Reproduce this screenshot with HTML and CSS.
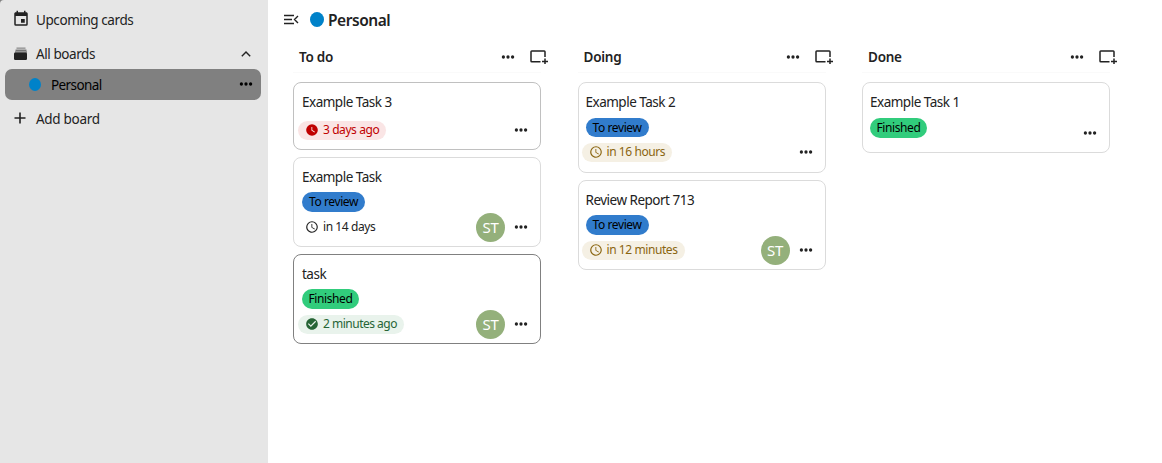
FILE: index.html
```html
<!DOCTYPE html>
<html lang="en">
<head>
<meta charset="utf-8">
<title>Personal - Deck</title>
<link rel="stylesheet" href="styles.css">
</head>
<body>
<svg width="0" height="0" class="defs">
  <symbol id="dots" viewBox="0 0 14 6"><circle cx="2.4" cy="3" r="1.65"/><circle cx="7" cy="3" r="1.65"/><circle cx="11.6" cy="3" r="1.65"/></symbol>
  <symbol id="add-card" viewBox="0 0 18 14"><path d="M10.500 11.700H1.800Q1 11.700 1 10.900V1.800Q1 1 1.800 1H14.200Q15 1 15 1.800V7M15 8.500V14M12 11.500H18" fill="none" stroke="currentColor" stroke-width="1.500"/></symbol>
  <symbol id="clock" viewBox="0 0 24 24"><path d="M12,20A8,8 0 0,0 20,12A8,8 0 0,0 12,4A8,8 0 0,0 4,12A8,8 0 0,0 12,20M12,2A10,10 0 0,1 22,12A10,10 0 0,1 12,22C6.470,22 2,17.500 2,12A10,10 0 0,1 12,2M12.500,7V12.250L17,14.920L16.250,16.150L11,13V7H12.500Z"/></symbol>
  <symbol id="clock-full" viewBox="0 0 24 24"><path d="M12,2A10,10 0 0,0 2,12A10,10 0 0,0 12,22A10,10 0 0,0 22,12A10,10 0 0,0 12,2M16.200,16.200L11,13V7H12.500V12.200L17,14.900L16.200,16.200Z"/></symbol>
  <symbol id="check" viewBox="0 0 24 24"><path d="M12 2C6.500 2 2 6.500 2 12S6.500 22 12 22 22 17.500 22 12 17.500 2 12 2M10 17L5 12L6.410 10.590L10 14.170L17.590 6.580L19 8L10 17Z"/></symbol>
</svg>
<div class="app">
  <nav class="sidebar">
    <a class="nav upcoming"><svg class="nav-icon" viewBox="0 0 24 24"><path d="M19,19H5V8H19M16,1V3H8V1H6V3H5C3.890,3 3,3.890 3,5V19A2,2 0 0,0 5,21H19A2,2 0 0,0 21,19V5C21,3.890 20.100,3 19,3H18V1M17,12H12V17H17V12Z"/></svg><span class="nav-text">Upcoming cards</span></a>
    <a class="nav boards"><svg class="nav-icon" viewBox="0 0 18 18"><path d="M4.500 2.500h9v1.300h-9z" opacity=".45"/><path d="M3.500 4.600h11v1.300h-11z" opacity=".65"/><path d="M3 6.500h12v1h-12z" opacity=".8"/><rect x="2" y="7.500" width="13" height="7.500" rx="1.200"/></svg><span class="nav-text">All boards</span><svg class="chevron" viewBox="0 0 10 6"><path d="M.8 5.200L5 1L9.200 5.200"/></svg></a>
    <a class="nav active"><span class="dot"></span><span class="nav-text">Personal</span><svg class="dots"><use href="#dots"/></svg></a>
    <a class="nav add"><svg class="nav-icon" viewBox="0 0 18 18"><path d="M7.200 2.500h1.600v4.700h4.700v1.600h-4.700v4.700h-1.600v-4.700h-4.700v-1.600h4.700z"/></svg><span class="nav-text">Add board</span></a>
  </nav>
  <main class="main">
    <header class="topbar"><svg class="menu" viewBox="0 0 15 11"><path d="M0 1.500H10M0 5.500H8M0 9.500H10M14 2L10.500 5.500L14 9"/></svg><span class="board-dot"></span><h1>Personal</h1></header>
    <div class="board">
      <section class="column first">
        <div class="head"><h2>To do</h2><svg class="dots"><use href="#dots"/></svg><svg class="add-card"><use href="#add-card"/></svg></div>
        <div class="cards">
          <article class="card simple mid"><h3>Example Task 3</h3><div class="foot"><span class="due overdue"><svg><use href="#clock-full"/></svg>3 days ago</span><svg class="dots"><use href="#dots"/></svg></div></article>
          <article class="card"><h3>Example Task</h3><span class="label review">To review</span><div class="foot"><span class="due"><svg><use href="#clock"/></svg>in 14 days</span><span class="avatar">ST</span><svg class="dots"><use href="#dots"/></svg></div></article>
          <article class="card current"><h3>task</h3><span class="label finished">Finished</span><div class="foot"><span class="due done"><svg><use href="#check"/></svg>2 minutes ago</span><span class="avatar">ST</span><svg class="dots"><use href="#dots"/></svg></div></article>
        </div>
      </section>
      <section class="column">
        <div class="head"><h2>Doing</h2><svg class="dots"><use href="#dots"/></svg><svg class="add-card"><use href="#add-card"/></svg></div>
        <div class="cards">
          <article class="card tall"><h3>Example Task 2</h3><span class="label review">To review</span><div class="foot"><span class="due soon"><svg><use href="#clock"/></svg>in 16 hours</span><svg class="dots"><use href="#dots"/></svg></div></article>
          <article class="card"><h3>Review Report 713</h3><span class="label review">To review</span><div class="foot"><span class="due soon"><svg><use href="#clock"/></svg>in 12 minutes</span><span class="avatar">ST</span><svg class="dots"><use href="#dots"/></svg></div></article>
        </div>
      </section>
      <section class="column">
        <div class="head"><h2>Done</h2><svg class="dots"><use href="#dots"/></svg><svg class="add-card"><use href="#add-card"/></svg></div>
        <div class="cards">
          <article class="card compact"><h3>Example Task 1</h3><div class="foot"><span class="label finished">Finished</span><svg class="dots"><use href="#dots"/></svg></div></article>
        </div>
      </section>
    </div>
  </main>
</div>
</body>
</html>
```
FILE: styles.css
```css
* { box-sizing: border-box; }
body { margin: 0; background: #fff; color: #222; font: 14px/20px "Segoe UI", "Noto Sans", sans-serif; }
svg { display: block; flex: none; fill: currentColor; }
.defs { position: absolute; }
h1, h2, h3 { margin: 0; white-space: nowrap; }
.app { display: flex; height: 463px; overflow: hidden; background: #808080; }
.sidebar { width: 268px; flex: none; padding: 4px 7px 0 5px; background: #e6e6e6; border-top-left-radius: 4px; }
.nav { display: flex; align-items: center; height: 31px; padding-left: 7px; border-radius: 7px; }
.nav-icon { width: 18px; height: 18px; margin-right: 6px; }
.upcoming .nav-icon { margin-top: -2px; }
.nav-text { font-size: 13.5px; white-space: nowrap; letter-spacing: -.42px; }
.boards { margin-top: 3px; padding-right: 10px; }
.chevron { width: 10px; height: 6px; margin-left: auto; fill: none; stroke: #222; stroke-width: 1.4; }
.active { background: #808080; color: #000; padding: 0 8px 0 24px; }
.active .nav-text { letter-spacing: -.6px; }
.dot { width: 12px; height: 13px; margin-right: 10px; border-radius: 50%; background: #0082c9; }
.dots { width: 14px; height: 6px; margin-left: auto; }
.active .dots { margin-top: -1px; }
.add { margin-top: 3px; }
.add .nav-text { letter-spacing: -.3px; }
.main { flex: 1; background: #fff; }
.topbar { display: flex; align-items: center; height: 39px; padding-left: 16px; }
.menu { width: 15px; height: 11px; margin-top: -1px; fill: none; stroke: #222; stroke-width: 1.4; }
.board-dot { width: 14px; height: 15px; margin: 0 4px 0 11px; border-radius: 50%; background: #0082c9; }
h1 { font-size: 15.5px; font-weight: 600; letter-spacing: -.45px; }
.board { display: flex; gap: 36.5px; padding-left: 25px; }
.column { width: 248px; --inset: 7px; }
.first { --inset: 8px; }
.head { display: flex; align-items: center; height: 36px; padding-left: 6px; }
.head .dots { margin-right: 15px; }
h2 { font-size: 13.5px; font-weight: 600; letter-spacing: -.25px; }
.add-card { width: 18px; height: 14px; margin-right: -7px; }
.cards { display: flex; flex-direction: column; gap: 7px; margin-top: -3px; padding-top: 9px; border-top: 1px solid #fafafa; }
.card { height: 90px; padding: 9px 12px 0 var(--inset); border: 1px solid #dbdbdb; border-radius: 8px; }
.mid { border-color: #c0c0c0; }
.current { border-color: #808080; }
h3 { height: 25px; font-size: 13.5px; font-weight: 400; letter-spacing: -.5px; }
.label { display: block; height: 20px; border-radius: 10px; font-size: 12px; line-height: 19px; letter-spacing: -.4px; color: #000; text-align: center; white-space: nowrap; }
.review { background: #317ccc; width: 63px; }
.finished { background: #31cc7c; width: 57px; }
.foot { display: flex; align-items: center; height: 20px; margin-top: 5px; }
.due { display: flex; align-items: center; height: 19px; margin-left: -4px; padding: 0 7px; border-radius: 10px; font-size: 12px; letter-spacing: -.42px; white-space: nowrap; }
.due svg { width: 14px; height: 14px; margin-right: 4px; }
.overdue { color: #c00000; background: #fae5e5; }
.soon { color: #8a6510; background: #f5f0e4; }
.done { color: #276536; background: #e9f3ec; letter-spacing: -.5px; }
.avatar { width: 29px; height: 29px; flex: none; margin-left: auto; border-radius: 50%; background: #94b07b; color: #fff; font-size: 15px; line-height: 29px; text-align: center; letter-spacing: -.3px; }
.avatar + .dots { margin-left: 9px; }
.simple { height: 68px; }
.simple .foot { margin-top: 3px; }
.tall { height: 91px; }
.tall h3, .compact h3 { height: 26px; }
.tall .label { height: 19px; }
.compact { height: 71px; }
.compact .foot { height: 19px; margin-top: 0; }
.compact .dots { margin-top: 11px; }
```
